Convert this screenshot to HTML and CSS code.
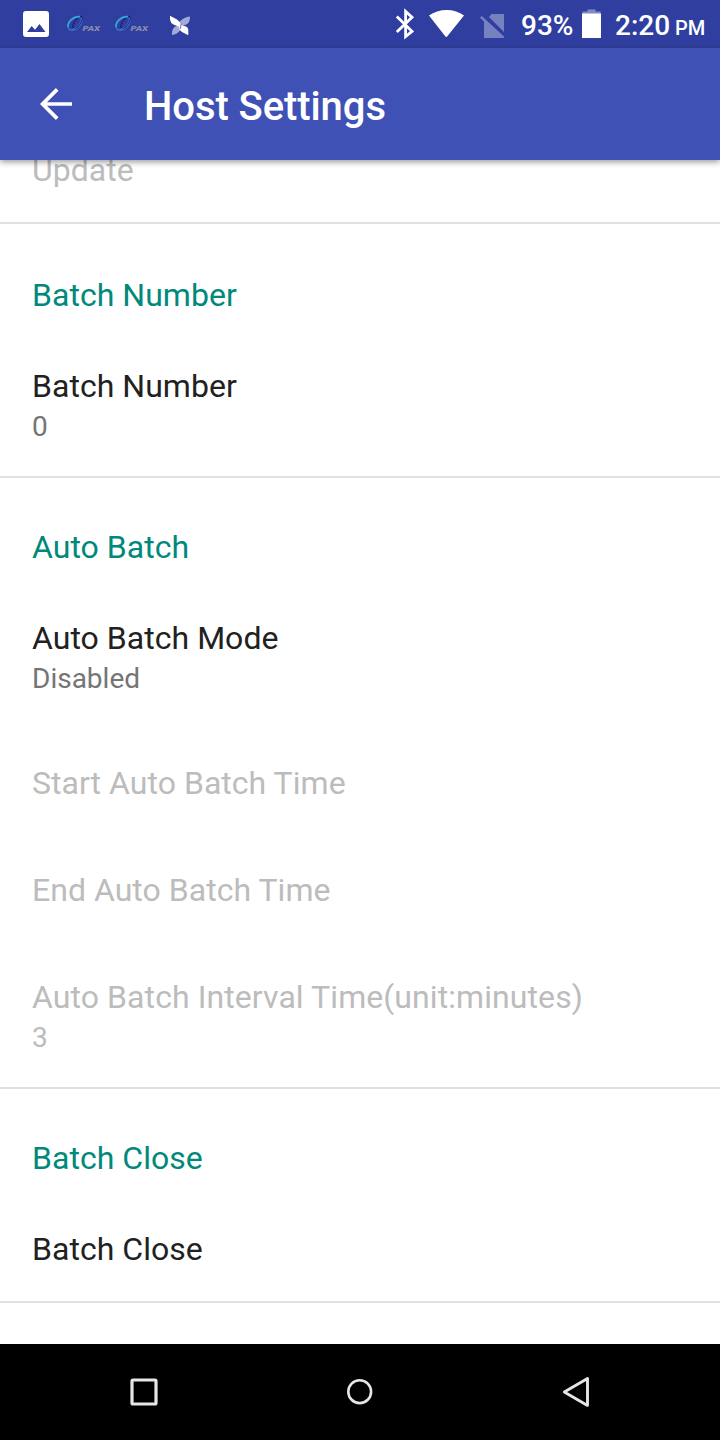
FILE: index.html
```html
<!DOCTYPE html>
<html lang="en">
<head>
<meta charset="utf-8">
<title>Host Settings</title>
<link rel="stylesheet" href="styles.css">
</head>
<body>
<div class="screen">
  <div class="status-bar">
    <svg class="status-left" width="210" height="48" viewBox="0 0 210 48">
      <defs>
        <g id="ring-logo" fill="none">
          <ellipse cx="75" cy="23.500" rx="8.300" ry="5" transform="rotate(-42 75 23.500)" stroke="#2f84c8" stroke-width="1.300"/>
          <ellipse cx="77.500" cy="22.500" rx="6.800" ry="2.800" transform="rotate(-55 77.500 22.500)" stroke="#2a1c84" stroke-width="1.400"/>
          <path d="M68.200 27C67 22 73 16.200 80 16.600" stroke="#35a6d2" stroke-width="1.700"/>
          <path d="M72 29.500C77 28 81 23 81.500 18" stroke="#3f74bd" stroke-width="1"/>
        </g>
      </defs>
      <path fill="#fff" fill-rule="evenodd" d="M26 11H46a3 3 0 0 1 3 3V34a3 3 0 0 1-3 3H26a3 3 0 0 1-3-3V14a3 3 0 0 1 3-3ZM27 32H45.500L39.500 24L35 29.800L31.700 26Z"/>
      <use href="#ring-logo"/>
      <text class="logo-text" x="82.500" y="31" textLength="17.500" lengthAdjust="spacingAndGlyphs">PAX</text>
      <use href="#ring-logo" x="48"/>
      <text class="logo-text" x="130.500" y="31" textLength="17.500" lengthAdjust="spacingAndGlyphs">PAX</text>
      <path fill="#a3a9da" d="M190 16.500C190 22 188 25 182 25.500L179.500 22C182 18.500 186 17 190 16.500ZM172 35C172 29.500 173 27 178 25.500L181 28.500C179.500 32 176 34.500 172 35Z"/>
      <path fill="#fff" d="M170 15.800L177 19.500Q180 21.500 181.500 25L186 26.500Q188.500 27.500 188.300 31V35.200L182 32Q179 30 178.500 26.500L173.500 24.500Q170.500 23 170 19.500Z"/>
      <path d="M181.200 23.500L180.200 29" stroke="#8087c7" stroke-width="1.300"/>
    </svg>
    <svg class="status-signals" width="130" height="48" viewBox="386 0 130 48">
      <path d="M396.800 16.500L412 31.300L405.600 36.500V11.500L412 17.300L396.800 32" fill="none" stroke="#fff" stroke-width="2.800"/>
      <path fill="#fff" d="M429 15.500C438.500 8 455 8 464 15.500L447.500 36Q446.300 38 445 36Z"/>
      <path fill="#7780c1" d="M491.500 14H504V32L489 17ZM480 17.800L481.800 16L504 36.500V38H484V21.500Z"/>
    </svg>
    <span class="battery-level">93%</span>
    <svg class="battery" width="20" height="48" viewBox="0 0 20 48">
      <path fill="#8289c5" d="M6.500 9.500H14.500V11.500H19.500V14H1.500V11.500H6.500Z"/>
      <path fill="#fff" d="M1 13.500H20V38H1Z"/>
    </svg>
    <span class="clock">2:20</span><span class="meridiem">PM</span>
  </div>
  <header class="app-bar">
    <svg class="back" width="32" height="32" viewBox="0 0 32 32"><path d="M32 16H3M17.200 1.400L2.600 16L17.200 30.600" fill="none" stroke="#fff" stroke-width="3.700"/></svg>
    <h1 class="app-title">Host Settings</h1>
  </header>
  <main class="settings">
    <section class="group clipped">
      <div class="item disabled"><div class="label">Update</div></div>
    </section>
    <section class="group first">
      <h2 class="heading">Batch Number</h2>
      <div class="item"><div class="label">Batch Number</div><div class="value">0</div></div>
    </section>
    <section class="group">
      <h2 class="heading">Auto Batch</h2>
      <div class="item"><div class="label">Auto Batch Mode</div><div class="value">Disabled</div></div>
      <div class="item disabled"><div class="label">Start Auto Batch Time</div></div>
      <div class="item disabled"><div class="label">End Auto Batch Time</div></div>
      <div class="item disabled"><div class="label long">Auto Batch Interval Time(unit:minutes)</div><div class="value">3</div></div>
    </section>
    <section class="group">
      <h2 class="heading">Batch Close</h2>
      <div class="item"><div class="label">Batch Close</div></div>
    </section>
  </main>
  <nav class="nav-bar">
    <svg width="32" height="32" viewBox="0 0 32 32"><rect x="4" y="4" width="24" height="24" rx="1" fill="none" stroke="#e6e6e6" stroke-width="3.200"/></svg>
    <svg width="32" height="32" viewBox="0 0 32 32"><circle cx="15.700" cy="15.700" r="11.400" fill="none" stroke="#e6e6e6" stroke-width="2.600"/></svg>
    <svg width="32" height="32" viewBox="0 0 32 32"><path d="M27.500 2.600V29.400L4.300 16Z" fill="none" stroke="#e6e6e6" stroke-width="2.900" stroke-linejoin="round"/></svg>
  </nav>
</div>
</body>
</html>
```
FILE: styles.css
```css
body {
  margin: 0;
  font-family: Roboto, "Liberation Sans", sans-serif;
}

.screen {
  display: flex;
  flex-direction: column;
  width: 720px;
  height: 1440px;
  overflow: hidden;
  background: #fff;
}

.status-bar {
  display: flex;
  flex: none;
  height: 48px;
  background: #303f9f;
  color: #fff;
  font-size: 28px;
  font-weight: 500;
  line-height: 52px;
  white-space: nowrap;
}

.status-signals {
  margin-left: 176px;
}

.logo-text {
  fill: #858caf;
  font-size: 7.5px;
  font-weight: 900;
  font-style: italic;
}

.battery-level {
  width: 60px;
  margin-left: 5px;
}

.clock {
  width: 55px;
  margin-left: 14px;
}

.meridiem {
  margin-left: 5px;
  font-size: 20px;
  line-height: 57px;
}

.app-bar {
  position: relative;
  z-index: 1;
  display: flex;
  flex: none;
  align-items: center;
  box-sizing: border-box;
  height: 112px;
  padding-left: 40px;
  background: #3f51b5;
  box-shadow: 0 2px 6px rgba(0, 0, 0, .4);
}

.app-title {
  margin: 6px 0 0 72px;
  color: #fff;
  font-size: 40px;
  font-weight: 500;
  letter-spacing: -.08px;
  line-height: 48px;
}

.settings {
  flex: 1;
  min-height: 0;
  overflow: hidden;
}

.group {
  padding: 50px 32px 33px;
  border-bottom: 2px solid #e0e0e0;
}

.group.clipped {
  margin-top: -9px;
  padding-top: 0;
}

.group.first {
  padding-top: 52px;
}

.heading {
  margin: 0 0 53px;
  color: #00897b;
  font-size: 32px;
  font-weight: 400;
  letter-spacing: .03px;
  line-height: 38px;
}

.item + .item {
  margin-top: 69px;
}

.label {
  color: #212121;
  font-size: 32px;
  letter-spacing: .03px;
  line-height: 38px;
}

.label.long {
  letter-spacing: .08px;
}

.value {
  margin-top: 5px;
  color: #757575;
  font-size: 28px;
  line-height: 33px;
}

.disabled .label,
.disabled .value {
  color: #bcbcbc;
}

.nav-bar {
  display: flex;
  flex: none;
  align-items: center;
  justify-content: space-between;
  box-sizing: border-box;
  height: 96px;
  padding: 0 128px;
  background: #000;
}
```
